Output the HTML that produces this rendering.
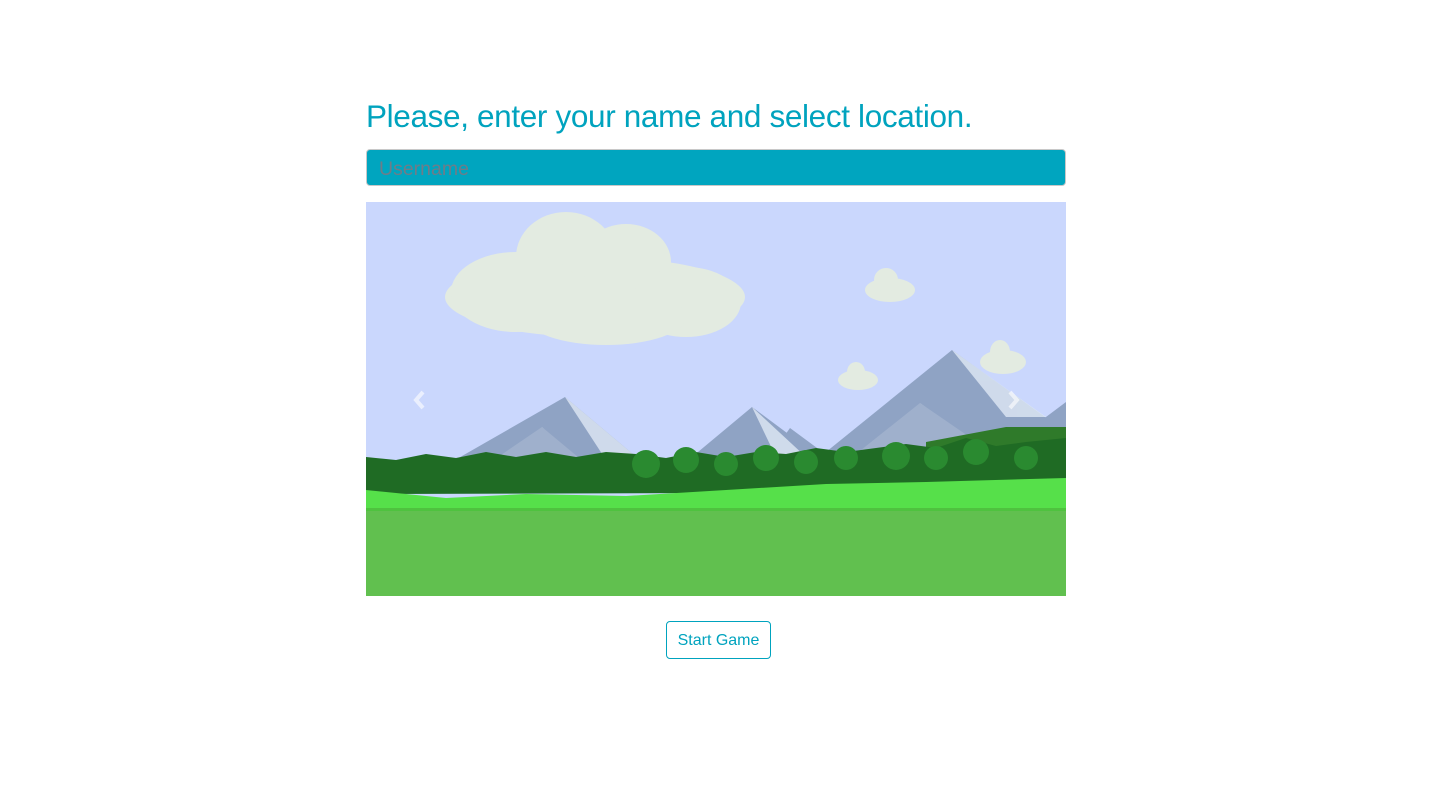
<!DOCTYPE html>
<html><head><style>
body{margin:0;background:#fff;font-family:"Liberation Sans",sans-serif;}
h1{position:absolute;left:366px;top:98px;margin:0;font-weight:normal;font-size:31.5px;color:#00a3be;letter-spacing:-0.35px;}
.inp{position:absolute;left:366px;top:149px;width:698px;height:35px;background:#00a5bf;border:1px solid #c8c8c8;border-radius:4px;}
.inp span{position:absolute;left:12px;top:8px;font-size:19.5px;color:#6f7c88;}
svg{position:absolute;left:366px;top:202px;}
.btn{position:absolute;left:666px;top:621px;width:103px;height:36px;border:1px solid #00a3be;border-radius:4px;color:#00a3be;font-size:16px;text-align:center;line-height:38px;}
</style></head><body>
<h1>Please, enter your name and select location.</h1>
<div class="inp"><span>Username</span></div>
<svg width="700" height="394" viewBox="0 0 700 394">
<rect width="700" height="394" fill="#cad7fd"/>
<g fill="#e3ebe1">
<ellipse cx="229" cy="95" rx="150" ry="40"/>
<ellipse cx="200" cy="55" rx="50" ry="45"/>
<ellipse cx="260" cy="60" rx="45" ry="38"/>
<ellipse cx="150" cy="90" rx="65" ry="40"/>
<ellipse cx="320" cy="100" rx="55" ry="35"/>
<ellipse cx="240" cy="115" rx="80" ry="28"/>
<ellipse cx="524" cy="88" rx="25" ry="12"/><ellipse cx="520" cy="78" rx="12" ry="12"/>
<ellipse cx="492" cy="178" rx="20" ry="10"/><ellipse cx="490" cy="170" rx="9" ry="10"/>
<ellipse cx="637" cy="160" rx="23" ry="12"/><ellipse cx="634" cy="150" rx="10" ry="12"/>
</g>
<g fill="#8fa3c4">
<polygon points="89,258 199,195 274,258"/>
<polygon points="320,260 386,205 460,260"/>
<polygon points="400,260 424,226 470,260"/>
<polygon points="460,250 586,148 700,230 700,260"/>
<polygon points="660,230 700,200 700,260"/>
</g>
<g fill="#dfe8f5" opacity=".8">
<polygon points="199,195 274,258 240,258"/><polygon points="176,225 220,270 195,270"/>
<polygon points="386,205 440,255 410,255"/><polygon points="586,148 680,215 640,215"/>
<polygon points="554,201 620,250 595,250"/>
</g>
<polygon fill="#9fb0cc" points="110,270 176,225 230,270"/>
<polygon fill="#9fb0cc" points="480,260 554,201 640,260"/>
<polygon fill="#2f7a2a" points="560,240 640,225 700,225 700,270 560,270"/>
<path fill="#1f6b24" d="M0,255 L30,258 60,252 90,256 120,250 150,255 180,250 210,255 240,250 270,252 300,256 330,250 360,255 390,250 420,252 450,246 480,250 510,246 540,242 570,246 600,236 630,244 660,240 700,236 L700,290 0,292Z"/>
<g fill="#2a8a30">
<circle cx="280" cy="262" r="14"/><circle cx="320" cy="258" r="13"/><circle cx="360" cy="262" r="12"/><circle cx="400" cy="256" r="13"/><circle cx="440" cy="260" r="12"/><circle cx="480" cy="256" r="12"/><circle cx="530" cy="254" r="14"/><circle cx="570" cy="256" r="12"/><circle cx="610" cy="250" r="13"/><circle cx="660" cy="256" r="12"/>
</g>
<path fill="#56e04a" d="M0,288 L80,296 160,292 260,294 360,288 460,282 560,280 700,276 L700,308 0,308Z"/>
<rect y="306" width="700" height="4" fill="#4fc23f"/>
<rect y="309" width="700" height="85" fill="#61c04f"/>
<path d="M57,190 L50,198 57,206" stroke="#fff" stroke-opacity=".6" stroke-width="4" fill="none"/>
<path d="M644,190 L651,198 644,206" stroke="#fff" stroke-opacity=".6" stroke-width="4" fill="none"/>
</svg>
<div class="btn">Start Game</div>
</body></html>
